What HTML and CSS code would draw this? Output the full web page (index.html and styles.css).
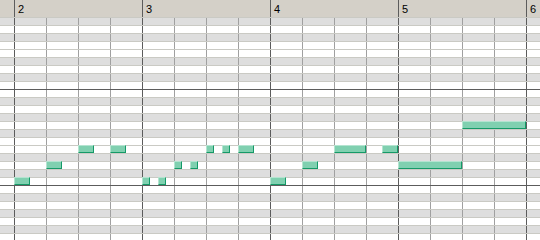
FILE: index.html
```html
<!DOCTYPE html>
<html lang="en">
<head>
  <meta charset="UTF-8">
  <title>Piano Roll</title>
  <link rel="stylesheet" href="styles.css">
</head>
<body>
  <div class="roll">
    <!-- Régua de compassos (o compasso 1 fica fora da tela) -->
    <div class="ruler">
      <div class="measure"></div>
      <div class="measure"><span>2</span></div>
      <div class="measure"><span>3</span></div>
      <div class="measure"><span>4</span></div>
      <div class="measure"><span>5</span></div>
      <div class="measure"><span>6</span></div>
    </div>

    <!-- Grade de notas -->
    <div class="grid">
      <div class="key black"></div>
      <div class="key"></div>
      <div class="key black"></div>
      <div class="key"></div>
      <div class="key"></div>
      <div class="key black"></div>
      <div class="key"></div>
      <div class="key black"></div>
      <div class="key"></div>
      <div class="key octave"></div>
      <div class="key black"></div>
      <div class="key"></div>
      <div class="key black"></div>
      <div class="key"></div>
      <div class="key black"></div>
      <div class="key"></div>
      <div class="key"></div>
      <div class="key black"></div>
      <div class="key"></div>
      <div class="key black"></div>
      <div class="key"></div>
      <div class="key octave"></div>
      <div class="key black"></div>
      <div class="key"></div>
      <div class="key black"></div>
      <div class="key"></div>
      <div class="key black"></div>
      <div class="key"></div>

      <div class="note" style="left:14px; top:160px; width:16px"></div>
      <div class="note" style="left:46px; top:144px; width:16px"></div>
      <div class="note" style="left:78px; top:128px; width:16px"></div>
      <div class="note" style="left:110px; top:128px; width:16px"></div>
      <div class="note" style="left:142px; top:160px; width:8px"></div>
      <div class="note" style="left:158px; top:160px; width:8px"></div>
      <div class="note" style="left:174px; top:144px; width:8px"></div>
      <div class="note" style="left:190px; top:144px; width:8px"></div>
      <div class="note" style="left:206px; top:128px; width:8px"></div>
      <div class="note" style="left:222px; top:128px; width:8px"></div>
      <div class="note" style="left:238px; top:128px; width:16px"></div>
      <div class="note" style="left:270px; top:160px; width:16px"></div>
      <div class="note" style="left:302px; top:144px; width:16px"></div>
      <div class="note" style="left:334px; top:128px; width:32px"></div>
      <div class="note" style="left:382px; top:128px; width:16px"></div>
      <div class="note" style="left:398px; top:144px; width:64px"></div>
      <div class="note" style="left:462px; top:104px; width:64px"></div>
    </div>
  </div>
</body>
</html>
```

FILE: styles.css
```css
body {
  margin: 0;
  padding: 0;
  font-family: "Liberation Sans", Arial, sans-serif;
  background: #fff;
}
.roll {
  width: 540px;
  height: 240px;
  overflow: hidden;
}
/* Régua */
.ruler {
  height: 17px;
  background: #d4d0c8;
  display: flex;
  margin-left: -114px;
}
.measure {
  flex: 0 0 128px;
  box-sizing: border-box;
  border-left: 1px solid #5c5c5c;
  padding: 3px 0 0 3px;
  font-size: 11px;
  line-height: 12px;
  color: #000;
}
/* Grade */
.grid {
  position: relative;
  display: flex;
  flex-direction: column;
}
.key {
  height: 8px;
  box-sizing: border-box;
  border-top: 1px solid #cacac4;
  background-color: #fff;
  background-image:
    linear-gradient(to right, #5c5c5c 1px, transparent 1px),
    linear-gradient(to right, #a0a0a0 1px, transparent 1px);
  background-size: 128px 100%, 32px 100%;
  background-position: 14px 0, 14px 0;
  background-origin: border-box;
  background-clip: border-box;
}
.key.black {
  background-color: #dedede;
}
.key.octave {
  border-top-color: #5c5c5c;
}
/* Notas */
.note {
  position: absolute;
  height: 8px;
  box-sizing: border-box;
  background: #80d0b0;
  border-top: 1px solid #b4e4d0;
  border-left: 1px solid #b4e4d0;
  border-right: 1px solid #149a68;
  border-bottom: 1px solid #149a68;
}
```
